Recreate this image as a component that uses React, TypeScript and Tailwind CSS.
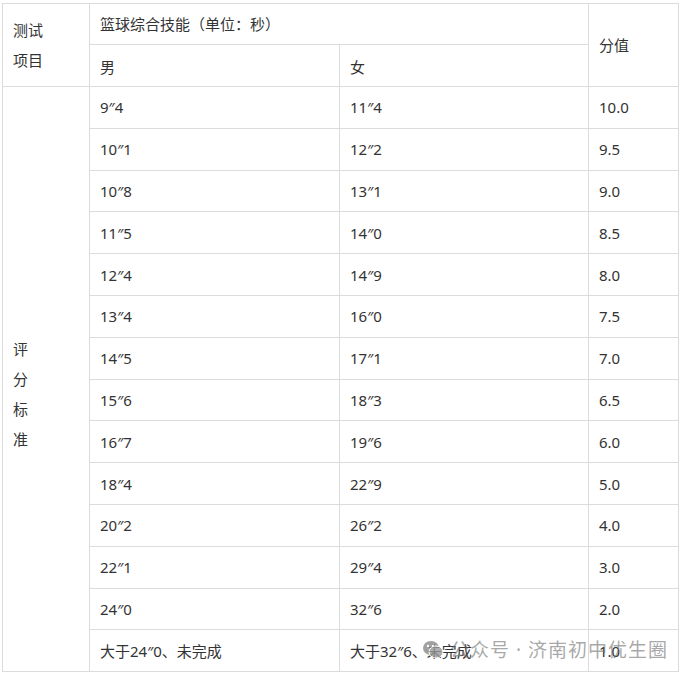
import React from "react";

const rows: [string, string, string][] = [
  ["9″4", "11″4", "10.0"],
  ["10″1", "12″2", "9.5"],
  ["10″8", "13″1", "9.0"],
  ["11″5", "14″0", "8.5"],
  ["12″4", "14″9", "8.0"],
  ["13″4", "16″0", "7.5"],
  ["14″5", "17″1", "7.0"],
  ["15″6", "18″3", "6.5"],
  ["16″7", "19″6", "6.0"],
  ["18″4", "22″9", "5.0"],
  ["20″2", "26″2", "4.0"],
  ["22″1", "29″4", "3.0"],
  ["24″0", "32″6", "2.0"],
  ["大于24″0、未完成", "大于32″6、未完成", "1.0"],
];

const cell = "border border-[#dcdcdc] px-[10px] py-0 align-middle text-left font-normal";

export default function App() {
  return (
    <div
      className="relative w-[683px] h-[676px] bg-white text-[#333] text-[15px] leading-[30px]"
      style={{ fontFamily: '"Noto Sans", "Noto Sans CJK SC", sans-serif' }}
    >
      <div className="pt-[3px] pl-[2px]">
        <table className="w-[676px] table-fixed border-collapse">
          <colgroup>
            <col className="w-[87px]" />
            <col className="w-[250px]" />
            <col className="w-[249px]" />
            <col className="w-[90px]" />
          </colgroup>
          <tbody>
            <tr className="h-[41px]">
              <td rowSpan={2} className={cell}>
                <div>测试</div>
                <div>项目</div>
              </td>
              <td colSpan={2} className={cell}>
                篮球综合技能（单位：秒）
              </td>
              <td rowSpan={2} className={cell}>
                分值
              </td>
            </tr>
            <tr className="h-[42px]">
              <td className={`${cell} pt-[2px]`}>男</td>
              <td className={`${cell} pt-[2px]`}>女</td>
            </tr>
            {rows.map((r, i) => (
              <tr key={i} className="h-[41.8px]">
                {i === 0 && (
                  <td rowSpan={rows.length} className={cell}>
                    <div>&nbsp;</div>
                    <div>评</div>
                    <div>分</div>
                    <div>标</div>
                    <div>准</div>
                  </td>
                )}
                <td className={cell}>{r[0]}</td>
                <td className={cell}>{r[1]}</td>
                <td className={cell}>{r[2]}</td>
              </tr>
            ))}
          </tbody>
        </table>
      </div>
      <div className="pointer-events-none absolute left-[422px] top-[637px] flex items-center gap-[6px] text-[19px] leading-[26px] text-[rgba(110,110,110,0.6)]">
        <svg width="22" height="20" viewBox="0 0 22 20" className="opacity-80">
          <ellipse cx="9" cy="8" rx="8" ry="7" fill="#8a8a8a" />
          <ellipse cx="14" cy="12" rx="7" ry="6" fill="#9a9a9a" stroke="#fff" strokeWidth="1" />
          <circle cx="6" cy="6" r="1.2" fill="#fff" />
          <circle cx="11" cy="6" r="1.2" fill="#fff" />
        </svg>
        <span className="tracking-[1px]">公众号 · 济南初中优生圈</span>
      </div>
    </div>
  );
}
